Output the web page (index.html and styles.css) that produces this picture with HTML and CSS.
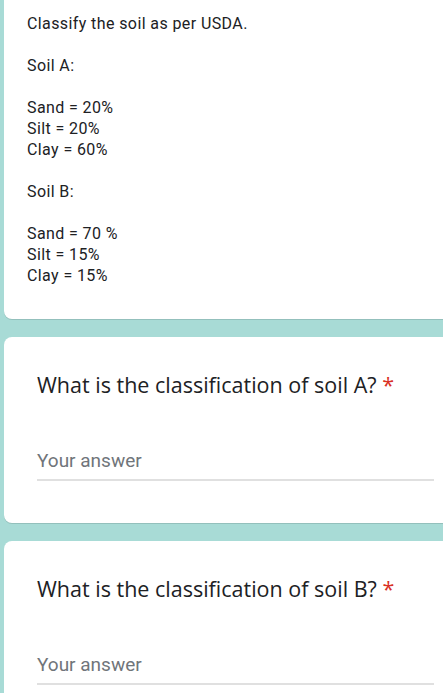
FILE: index.html
```html
<!DOCTYPE html>
<html>
<head>
<meta charset="utf-8">
<link rel="stylesheet" href="styles.css">
</head>
<body>
<div class="page">
  <div class="card card-desc">
    <div class="desc">Classify the soil as per USDA.

Soil A:

Sand = 20%
Silt = 20%
Clay = 60%

Soil B:

Sand = 70 %
Silt = 15%
Clay = 15%</div>
  </div>
  <div class="card card-q">
    <div class="q-title">What is the classification of soil A? <span class="req">*</span></div>
    <div class="answer"><span class="placeholder">Your answer</span></div>
  </div>
  <div class="card card-q">
    <div class="q-title">What is the classification of soil B? <span class="req">*</span></div>
    <div class="answer"><span class="placeholder">Your answer</span></div>
  </div>
</div>
</body>
</html>
```
FILE: styles.css
```css
html, body {
  margin: 0;
  padding: 0;
  height: 100%;
  overflow: hidden;
}
body {
  background: #a8dbd6;
}
.page {
  padding-left: 4px;
  margin-right: -20px;
  display: flex;
  flex-direction: column;
  gap: 18px;
}
.card {
  background: #fff;
  border-radius: 8px;
  box-shadow: 0 1px 0 rgba(0, 0, 0, 0.12);
}
.card-desc {
  border-top-left-radius: 0;
  border-top-right-radius: 0;
  padding: 13px 0 33px 23px;
}
.desc {
  white-space: pre-line;
  font-family: Roboto, "Liberation Sans", sans-serif;
  font-size: 16px;
  letter-spacing: 0.4px;
  line-height: 21px;
  color: #202124;
}
.card-q {
  padding: 34px 29px 42px 33px;
}
.q-title {
  font-family: "Open Sans", Roboto, sans-serif;
  font-size: 21.5px;
  line-height: 28px;
  color: #202124;
}
.req {
  color: #d93025;
}
.answer {
  margin-top: 50px;
  padding-bottom: 6px;
  border-bottom: 2px solid #e0e0e0;
}
.placeholder {
  font-family: Roboto, "Liberation Sans", sans-serif;
  font-size: 19px;
  line-height: 24px;
  color: #70757a;
  display: block;
}
```
